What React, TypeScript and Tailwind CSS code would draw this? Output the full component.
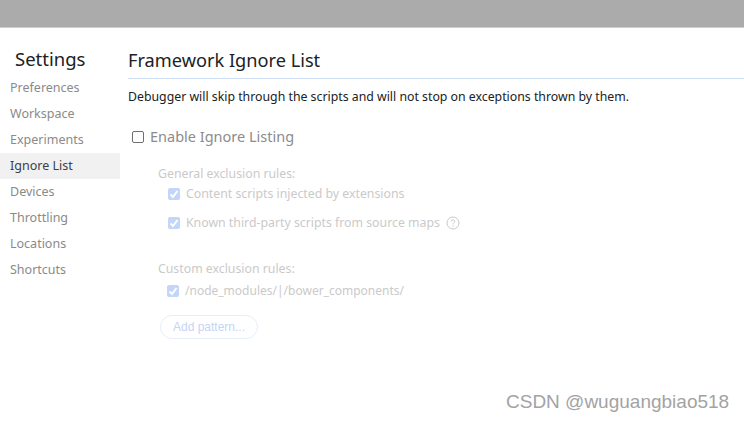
import React from "react";

const navItems = ["Preferences", "Workspace", "Experiments", "Ignore List", "Devices", "Throttling", "Locations", "Shortcuts"];

const font = "font-['Noto_Sans',sans-serif]";

const FadedCheck: React.FC = () => (
  <span className="flex h-3 w-3 shrink-0 items-center justify-center rounded-[2px] bg-[#c3d5f8]">
    <svg viewBox="0 0 12 12" className="h-3 w-3" fill="none" stroke="#ffffff" strokeWidth="2">
      <path d="M2.5 6.5 L5 9 L9.5 3" />
    </svg>
  </span>
);

const App: React.FC = () => {
  return (
    <div className={`relative flex h-[422px] w-[744px] flex-col overflow-hidden bg-white ${font}`}>
      <div className="h-[28px] shrink-0 border-b border-[#c8d0da] bg-[#ababab]" />
      <div className="flex flex-1">
        <aside className="w-[120px] shrink-0 pt-[17px]">
          <h1 className="h-[30px] pl-[15px] text-[18.5px] leading-[28px] text-[#202124]">Settings</h1>
          <nav className="flex flex-col">
            {navItems.map((item) => (
              <div
                key={item}
                className={
                  item === "Ignore List"
                    ? "h-[26px] bg-[#f1f1f1] pl-[10px] text-[12.5px] leading-[26px] text-[#3c4043]"
                    : "h-[26px] pl-[10px] text-[12.5px] leading-[26px] text-[#8a8a8a]"
                }
              >
                {item}
              </div>
            ))}
          </nav>
        </aside>
        <main className="flex-1 pl-[8px] pt-[18px]">
          <h2 className="h-[33px] border-b border-[#cfe0f8] text-[18.2px] leading-[29px] text-[#202124]">Framework Ignore List</h2>
          <p className="mt-[9px] text-[12.3px] leading-[18px] text-[#202124]">
            Debugger will skip through the scripts and will not stop on exceptions thrown by them.
          </p>
          <label className="mt-[21px] flex h-[20px] items-center pl-[4px]">
            <span className="h-[12px] w-[12px] rounded-[2px] border border-[#6f6f6f]" />
            <span className="ml-[6px] pb-[2px] text-[14.5px] leading-[20px] text-[#8c8c8c]">Enable Ignore Listing</span>
          </label>
          <div className="pl-[30px] pt-[18px] text-[12.3px] leading-[18px] text-[#cacaca]">
            <div className="h-[18px]">General exclusion rules:</div>
            <div className="mt-[1px] flex h-[20px] items-center gap-[6px] pl-[10px]">
              <FadedCheck />
              <span>Content scripts injected by extensions</span>
            </div>
            <div className="mt-[9px] flex h-[20px] items-center gap-[6px] pl-[10px]">
              <FadedCheck />
              <span>Known third-party scripts from source maps</span>
              <svg viewBox="0 0 14 14" className="h-[14px] w-[14px]" fill="none" stroke="#c9c9c9" strokeWidth="1">
                <circle cx="7" cy="7" r="6" />
                <path d="M5.2 5.5 C5.2 3.3 8.8 3.3 8.8 5.4 C8.8 6.8 7 6.7 7 8.4" />
                <path d="M7 9.6 V10.8" />
              </svg>
            </div>
            <div className="mt-[27px] h-[18px]">Custom exclusion rules:</div>
            <div className="mt-[3px] flex h-[20px] items-center gap-[6px] pl-[9px] text-[12px]">
              <FadedCheck />
              <span>/node_modules/|/bower_components/</span>
            </div>
            <button className="ml-[2px] mt-[14px] block h-[24px] w-[98px] rounded-full border border-[#e6eefb] font-['Liberation_Sans',sans-serif] text-[12px] text-[#c5d5f5]">
              Add pattern...
            </button>
          </div>
        </main>
      </div>
      <span className="absolute left-[506px] top-[391px] font-['Liberation_Sans',sans-serif] text-[19px] leading-[22px] text-[#a3a3a3]">
        CSDN @wuguangbiao518
      </span>
    </div>
  );
};

export default App;
